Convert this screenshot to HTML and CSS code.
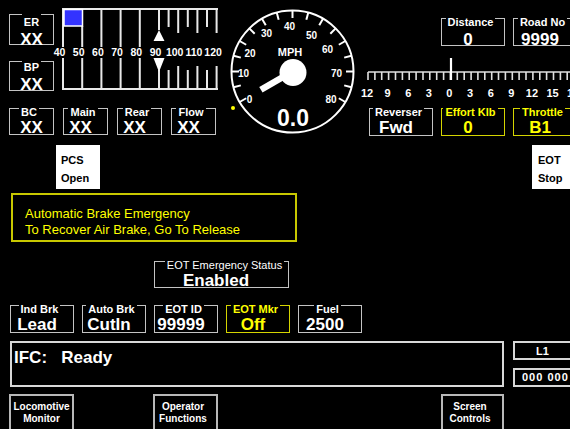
FILE: index.html
```html
<!DOCTYPE html>
<html>
<head>
<meta charset="utf-8">
<title>Locomotive Display</title>
<link rel="stylesheet" href="styles.css">
</head>
<body>
<div class="screen">
  <div class="top">
    <div class="left">
      <div class="left-upper">
        <div class="erbp">
          <div class="fbox er"><span class="lbl">ER</span><span class="val">XX</span></div>
          <div class="fbox bp"><span class="lbl">BP</span><span class="val">XX</span></div>
        </div>
        <svg class="bargauge" viewBox="0 0 166 95" width="166" height="95">
          <g stroke="#e8e8e8" stroke-width="2" fill="none">
            <path d="M7 9H163"/>
            <path d="M8 8V47M27.2 26V47M46.4 9V47M65.6 9V47M84.8 9V47M104 9V30"/>
            <path d="M113.6 9V27M123.2 9V33M132.8 9V27M142.4 9V33M152 9V27M161.6 8V33"/>
            <path d="M7 89H163"/>
            <path d="M8 58V90M27.2 58V89M46.4 58V89M65.6 58V89M84.8 58V89M104 70V89"/>
            <path d="M113.6 70V89M123.2 66V89M132.8 70V89M142.4 66V89M152 70V89M161.6 66V90"/>
          </g>
          <rect x="9" y="9.5" width="18.5" height="16.5" fill="#3333ff" stroke="#ffffff" stroke-width="1.5"/>
          <path d="M104 30L98.5 41H109.5Z M98.5 58H109.5L104 72Z" fill="#ffffff"/>
          <g class="svgtxt" font-size="10.5">
            <text x="4.5" y="56">40</text>
            <text x="23.7" y="56">50</text>
            <text x="42.9" y="56">60</text>
            <text x="62.1" y="56">70</text>
            <text x="81.3" y="56">80</text>
            <text x="100.5" y="56">90</text>
            <text x="119.7" y="56">100</text>
            <text x="138.9" y="56">110</text>
            <text x="158.1" y="56">120</text>
          </g>
        </svg>
      </div>
      <div class="row4">
        <div class="fbox sm"><span class="lbl">BC</span><span class="val v0">XX</span></div>
        <div class="fbox sm"><span class="lbl">Main</span><span class="val">XX</span></div>
        <div class="fbox sm"><span class="lbl">Rear</span><span class="val">XX</span></div>
        <div class="fbox sm"><span class="lbl">Flow</span><span class="val">XX</span></div>
      </div>
    </div>

    <svg class="speedo" viewBox="0 0 136 140" width="136" height="140">
      <circle cx="66.5" cy="71.5" r="61" fill="none" stroke="#ffffff" stroke-width="2"/>
      <g stroke="#ffffff" stroke-width="2">
        <line x1="66.5" y1="10.5" x2="66.5" y2="18" transform="rotate(-120 66.5 71.5)"/>
        <line x1="66.5" y1="10.5" x2="66.5" y2="18" transform="rotate(-105 66.5 71.5)"/>
        <line x1="66.5" y1="10.5" x2="66.5" y2="18" transform="rotate(-90 66.5 71.5)"/>
        <line x1="66.5" y1="10.5" x2="66.5" y2="18" transform="rotate(-75 66.5 71.5)"/>
        <line x1="66.5" y1="10.5" x2="66.5" y2="18" transform="rotate(-60 66.5 71.5)"/>
        <line x1="66.5" y1="10.5" x2="66.5" y2="18" transform="rotate(-45 66.5 71.5)"/>
        <line x1="66.5" y1="10.5" x2="66.5" y2="18" transform="rotate(-30 66.5 71.5)"/>
        <line x1="66.5" y1="10.5" x2="66.5" y2="18" transform="rotate(-15 66.5 71.5)"/>
        <line x1="66.5" y1="10.5" x2="66.5" y2="18"/>
        <line x1="66.5" y1="10.5" x2="66.5" y2="18" transform="rotate(15 66.5 71.5)"/>
        <line x1="66.5" y1="10.5" x2="66.5" y2="18" transform="rotate(30 66.5 71.5)"/>
        <line x1="66.5" y1="10.5" x2="66.5" y2="18" transform="rotate(45 66.5 71.5)"/>
        <line x1="66.5" y1="10.5" x2="66.5" y2="18" transform="rotate(60 66.5 71.5)"/>
        <line x1="66.5" y1="10.5" x2="66.5" y2="18" transform="rotate(75 66.5 71.5)"/>
        <line x1="66.5" y1="10.5" x2="66.5" y2="18" transform="rotate(90 66.5 71.5)"/>
        <line x1="66.5" y1="10.5" x2="66.5" y2="18" transform="rotate(105 66.5 71.5)"/>
        <line x1="66.5" y1="10.5" x2="66.5" y2="18" transform="rotate(120 66.5 71.5)"/>
      </g>
      <g class="svgtxt" font-size="10">
        <text x="23.5" y="102.5">0</text>
        <text x="17.5" y="76.5">10</text>
        <text x="24" y="56.5">20</text>
        <text x="40.5" y="37">30</text>
        <text x="63.5" y="29.5">40</text>
        <text x="85.5" y="38.5">50</text>
        <text x="101.5" y="53">60</text>
        <text x="110.5" y="76.5">70</text>
        <text x="105" y="102.5">80</text>
        <text x="64" y="56" font-size="11">MPH</text>
      </g>
      <rect x="63.2" y="35" width="6.6" height="36.5" fill="#ffffff" transform="rotate(-120 66.5 71.5)"/>
      <circle cx="67" cy="72.5" r="13.5" fill="#ffffff"/>
      <text class="svgtxt" x="67" y="126" font-size="23">0.0</text>
      <circle cx="7" cy="108" r="2" fill="#ffff00"/>
    </svg>

    <div class="right">
      <div class="row-dist">
        <div class="fbox md"><span class="lbl">Distance</span><span class="val">0</span></div>
        <div class="fbox md"><span class="lbl">Road No</span><span class="val">9999</span></div>
      </div>
      <svg class="scale" viewBox="0 0 208 45" width="208" height="45">
        <g stroke="#e0e0e0" stroke-width="1.6" fill="none">
          <path d="M6 17H208"/>
          <path d="M6 17V25M12.9 17V25M19.7 17V25M26.6 17V25M33.5 17V25M40.4 17V25M47.2 17V25M54.1 17V25M61 17V25M67.8 17V25M74.7 17V25M81.6 17V25M88.4 17V25M95.3 17V25M102.2 17V25M109.1 17V25M115.9 17V25M122.8 17V25M129.7 17V25M136.5 17V25M143.4 17V25M150.3 17V25M157.1 17V25M164 17V25M170.9 17V25M177.8 17V25M184.6 17V25M191.5 17V25M198.4 17V25M205.2 17V25"/>
          <path d="M89 3V25" stroke-width="2.2" stroke="#ffffff"/>
        </g>
        <g class="svgtxt" font-size="11">
          <text x="5" y="42">12</text>
          <text x="25.6" y="42">9</text>
          <text x="46.2" y="42">6</text>
          <text x="66.8" y="42">3</text>
          <text x="87.4" y="42">0</text>
          <text x="108" y="42">3</text>
          <text x="128.7" y="42">6</text>
          <text x="149.3" y="42">9</text>
          <text x="169.9" y="42">12</text>
          <text x="190.5" y="42">15</text>
          <text x="211.1" y="42">18</text>
        </g>
      </svg>
      <div class="row-rev">
        <div class="fbox md"><span class="lbl">Reverser</span><span class="val">Fwd</span></div>
        <div class="fbox md y"><span class="lbl">Effort Klb</span><span class="val">0</span></div>
        <div class="fbox md y"><span class="lbl">Throttle</span><span class="val">B1</span></div>
      </div>
    </div>
  </div>

  <div class="btnrow">
    <div class="wbtn pcs">PCS<br>Open</div>
    <div class="wbtn eot">EOT<br>Stop</div>
  </div>

  <div class="alert">
    Automatic Brake Emergency<br>
    To Recover Air Brake, Go To Release
  </div>

  <div class="eotrow">
    <div class="fbox status"><span class="lbl">EOT Emergency Status</span><span class="val">Enabled</span></div>
  </div>

  <div class="row5">
    <div class="fbox md"><span class="lbl">Ind Brk</span><span class="val">Lead</span></div>
    <div class="fbox md"><span class="lbl">Auto Brk</span><span class="val">CutIn</span></div>
    <div class="fbox md"><span class="lbl">EOT ID</span><span class="val">99999</span></div>
    <div class="fbox md y"><span class="lbl">EOT Mkr</span><span class="val">Off</span></div>
    <div class="fbox md"><span class="lbl">Fuel</span><span class="val">2500</span></div>
  </div>

  <div class="ifcrow">
    <div class="ifc">IFC:&nbsp;&nbsp;&nbsp;Ready</div>
    <div class="sidecol">
      <div class="sbox l1">L1</div>
      <div class="sbox num">000 000</div>
    </div>
  </div>

  <div class="navrow">
    <div class="nbtn loco">Locomotive<br>Monitor</div>
    <div class="nbtn oper">Operator<br>Functions</div>
    <div class="nbtn scr">Screen<br>Controls</div>
  </div>
</div>
</body>
</html>
```

FILE: styles.css
```css
* {
  box-sizing: border-box;
}

html,
body {
  margin: 0;
  padding: 0;
  background: #000000;
}

body {
  width: 570px;
  height: 429px;
  overflow: hidden;
  font-family: "Liberation Sans", Arial, sans-serif;
  color: #ffffff;
}

.screen {
  width: 570px;
  height: 429px;
  overflow: hidden;
}

.svgtxt {
  fill: #ffffff;
  font-family: "Liberation Sans", Arial, sans-serif;
  font-weight: bold;
  text-anchor: middle;
}

/* ---------- top area ---------- */
.top {
  display: flex;
  height: 140px;
}

.left {
  margin-left: 9px;
  width: 208px;
  flex-shrink: 0;
}

.left-upper {
  display: flex;
  height: 108px;
}

.erbp {
  width: 45px;
  margin-right: 1px;
  flex-shrink: 0;
}

.bargauge {
  display: block;
  flex-shrink: 0;
  overflow: visible;
}

.row4 {
  display: flex;
  gap: 9px;
}

.speedo {
  display: block;
  margin-left: 9px;
  flex-shrink: 0;
  overflow: visible;
}

.right {
  width: 208px;
  flex-shrink: 0;
}

.row-dist {
  display: flex;
  gap: 8px;
  margin-top: 18px;
  padding-left: 79px;
}

.row-dist .val {
  margin-top: 2px;
}

.scale {
  display: block;
  margin-top: 9px;
  overflow: visible;
}

.row-rev {
  display: flex;
  gap: 8px;
  margin-top: 8px;
  padding-left: 7px;
}

/* ---------- field boxes ---------- */
.fbox {
  border: 1px solid #c4c4c4;
  display: flex;
  flex-direction: column;
  align-items: center;
  flex-shrink: 0;
  width: 64px;
  height: 28px;
}

.fbox.sm {
  width: 45px;
  height: 27px;
}

.fbox .lbl {
  font-weight: bold;
  font-size: 11px;
  line-height: 13px;
  margin-top: -3px;
  margin-right: 5px;
  padding: 0 2px;
  background: #000000;
  white-space: nowrap;
}

.fbox .val {
  font-weight: bold;
  font-size: 17px;
  line-height: 17px;
  margin-right: 10px;
  white-space: nowrap;
}

.fbox .val.v0 {
  margin-right: 0;
}

.fbox.y {
  border-color: #d4d400;
  color: #ffff00;
}

.fbox.er {
  width: 45px;
  height: 31px;
  margin-top: 14px;
}

.fbox.er .lbl {
  padding-top: 4px;
  margin-right: 0;
}

.fbox.er .val {
  margin-top: 2px;
  margin-right: 0;
}

.fbox.bp {
  width: 45px;
  height: 30px;
  margin-top: 16px;
}

.fbox.bp .lbl {
  padding-top: 2px;
  margin-right: 0;
}

.fbox.bp .val {
  margin-top: 2px;
  margin-right: 0;
}

/* ---------- white buttons ---------- */
.btnrow {
  display: flex;
  margin-top: 5px;
  height: 44px;
}

.wbtn {
  background: #ffffff;
  color: #000000;
  font-weight: bold;
  font-size: 11px;
  line-height: 18px;
  height: 44px;
  padding-top: 6px;
}

.wbtn.pcs {
  margin-left: 56px;
  width: 44px;
  padding-left: 5px;
}

.wbtn.eot {
  margin-left: auto;
  width: 38px;
  padding-left: 6px;
}

/* ---------- alert ---------- */
.alert {
  margin: 4px 0 0 11px;
  width: 286px;
  height: 49px;
  border: 2px solid #c8c800;
  color: #ffff00;
  font-size: 13px;
  line-height: 16px;
  padding: 11px 0 0 12px;
}

/* ---------- EOT status ---------- */
.eotrow {
  margin-top: 19px;
  padding-left: 154px;
}

.fbox.status {
  width: 135px;
  height: 27px;
}

.fbox.status .lbl {
  font-weight: normal;
  margin-right: 0;
  margin-left: 6px;
}

.fbox.status .val {
  margin-right: 11px;
}

/* ---------- bottom field row ---------- */
.row5 {
  display: flex;
  gap: 8px;
  margin-top: 17px;
  padding-left: 10px;
}

/* ---------- IFC row ---------- */
.ifcrow {
  display: flex;
  margin-top: 8px;
  padding-left: 10px;
}

.ifc {
  width: 494px;
  height: 46px;
  border: 2px solid #d8d8d8;
  font-weight: bold;
  font-size: 17px;
  line-height: 20px;
  padding: 5px 0 0 2px;
  flex-shrink: 0;
}

.sidecol {
  margin-left: 9px;
  width: 64px;
  flex-shrink: 0;
}

.sbox {
  height: 19px;
  border: 2px solid #d8d8d8;
  font-weight: bold;
  font-size: 11px;
  line-height: 13px;
}

.sbox.l1 {
  text-align: center;
  padding: 2px 5px 0 0;
}

.sbox.num {
  margin-top: 8px;
  padding: 1px 0 0 7px;
  letter-spacing: 1px;
}

/* ---------- nav buttons ---------- */
.navrow {
  display: flex;
  margin-top: 7px;
}

.nbtn {
  flex-shrink: 0;
  width: 65px;
  height: 40px;
  border: 2px solid #b8b8b8;
  font-weight: bold;
  font-size: 10px;
  line-height: 12px;
  text-align: center;
  padding-top: 5px;
}

.nbtn.loco {
  margin-left: 9px;
}

.nbtn.oper {
  margin-left: 79px;
  padding-right: 5px;
}

.nbtn.scr {
  margin-left: 223px;
  width: 63px;
  padding-right: 5px;
}
```
